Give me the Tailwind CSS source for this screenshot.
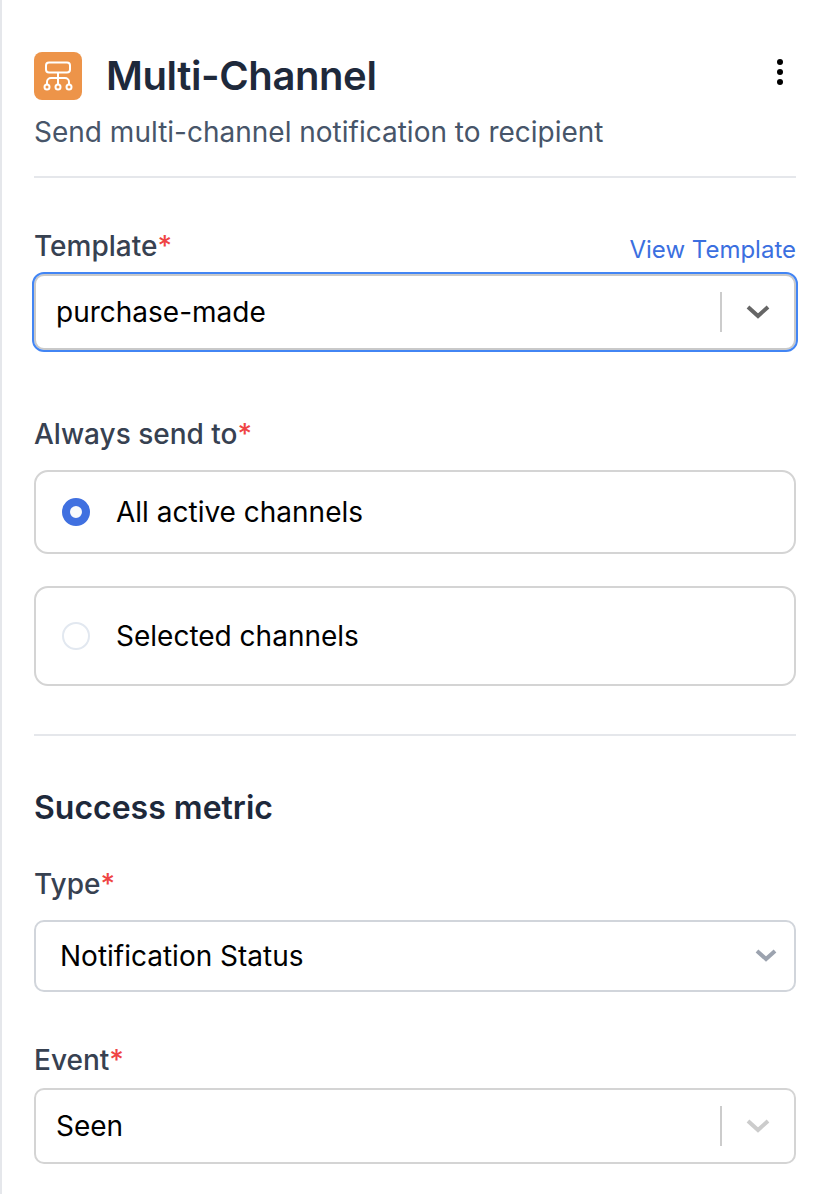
<!DOCTYPE html>
<html lang="en">
<head>
  <meta charset="UTF-8">
  <title>Multi-Channel</title>
  <script src="https://cdn.jsdelivr.net/npm/@tailwindcss/browser@4"></script>
</head>
<body class="bg-white">
  <div class="h-[1194px] overflow-hidden border-l-2 border-[#e5e7eb] pl-[32px] pr-[32px] pt-[52px] font-['Inter',sans-serif]">
    <!-- header -->
    <div class="flex items-center justify-between h-[48px]">
      <div class="flex items-center gap-[24px]">
        <div class="w-[48px] h-[48px] rounded-[8px] bg-[#ed9449] flex items-center justify-center">
          <svg width="32" height="32" viewBox="0 0 32 32" fill="none" stroke="#fff" stroke-width="2">
            <rect x="4" y="2.500" width="24" height="10" rx="3"/>
            <path d="M16 12.500v12M5 24.500v-2.500a4 4 0 0 1 4-4h14a4 4 0 0 1 4 4v2.500"/>
            <circle cx="5" cy="27" r="2.500"/>
            <circle cx="16" cy="27" r="2.500"/>
            <circle cx="27" cy="27" r="2.500"/>
          </svg>
        </div>
        <h1 class="text-[40px] leading-[48px] font-semibold tracking-[-0.4px] text-[#1e293b]">Multi-Channel</h1>
      </div>
      <svg class="mr-[12px] mb-[8px]" width="8" height="28" viewBox="0 0 8 28" fill="#000">
        <circle cx="4" cy="4" r="3"/><circle cx="4" cy="14" r="3"/><circle cx="4" cy="24" r="3"/>
      </svg>
    </div>
    <p class="mt-[14px] text-[28px] leading-[36px] text-[#475569]">Send multi-channel notification to recipient</p>
    <div class="mt-[26px] border-t-2 border-[#e5e7eb]"></div>

    <!-- template -->
    <div class="mt-[50px] flex items-end justify-between h-[36px]">
      <label class="text-[28px] leading-[36px] font-medium text-[#374151]">Template<span class="text-[#ef4444]">*</span></label>
      <a class="text-[24px] leading-[32px] relative top-[2px] text-[#3b6fe0]">View Template</a>
    </div>
    <div class="mt-[10px] h-[76px] rounded-[10px] border-2 border-[#c9c9c9] outline-2 outline-[#4285f4] flex items-center pl-[20px]">
      <span class="flex-1 text-[28px] text-black">purchase-made</span>
      <div class="w-[2px] h-[40px] bg-[#cccccc]"></div>
      <div class="w-[72px] flex justify-center">
        <svg width="24" height="16" viewBox="0 0 24 16" fill="none" stroke="#666" stroke-width="4"><path d="M2 3l10 9 10-9"/></svg>
      </div>
    </div>

    <!-- always send to -->
    <label class="mt-[66px] block text-[28px] leading-[36px] font-medium text-[#374151]">Always send to<span class="text-[#ef4444]">*</span></label>
    <div class="mt-[18px] h-[84px] rounded-[14px] border-2 border-[#d4d4d4] flex items-center pl-[26px] gap-[26px]">
      <span class="w-[28px] h-[28px] rounded-full border-[8px] border-[#4070e0] bg-[#f8fafc]"></span>
      <span class="text-[28px] text-black">All active channels</span>
    </div>
    <div class="mt-[32px] h-[100px] rounded-[14px] border-2 border-[#d4d4d4] flex items-center pl-[26px] gap-[26px]">
      <span class="w-[28px] h-[28px] rounded-full border-2 border-[#e2e8f0]"></span>
      <span class="text-[28px] text-black">Selected channels</span>
    </div>
    <div class="mt-[48px] border-t-2 border-[#e5e7eb]"></div>

    <!-- success metric -->
    <h2 class="mt-[52px] text-[32px] leading-[40px] font-semibold text-[#1e293b]">Success metric</h2>
    <label class="mt-[38px] block text-[28px] leading-[36px] font-medium text-[#374151]">Type<span class="text-[#ef4444]">*</span></label>
    <div class="mt-[18px] h-[72px] rounded-[10px] border-2 border-[#d1d5db] flex items-center pl-[24px]">
      <span class="flex-1 text-[28px] text-black">Notification Status</span>
      <div class="w-[56px] flex justify-center">
        <svg width="22" height="14" viewBox="0 0 22 14" fill="none" stroke="#9ca3af" stroke-width="4"><path d="M2 2l9 8 9-8"/></svg>
      </div>
    </div>
    <label class="mt-[50px] block text-[28px] leading-[36px] font-medium text-[#374151]">Event<span class="text-[#ef4444]">*</span></label>
    <div class="mt-[10px] h-[76px] rounded-[10px] border-2 border-[#d4d4d4] flex items-center pl-[20px]">
      <span class="flex-1 text-[28px] text-black">Seen</span>
      <div class="w-[2px] h-[40px] bg-[#cccccc]"></div>
      <div class="w-[72px] flex justify-center">
        <svg width="24" height="16" viewBox="0 0 24 16" fill="none" stroke="#cccccc" stroke-width="4"><path d="M2 3l10 9 10-9"/></svg>
      </div>
    </div>
  </div>
</body>
</html>
